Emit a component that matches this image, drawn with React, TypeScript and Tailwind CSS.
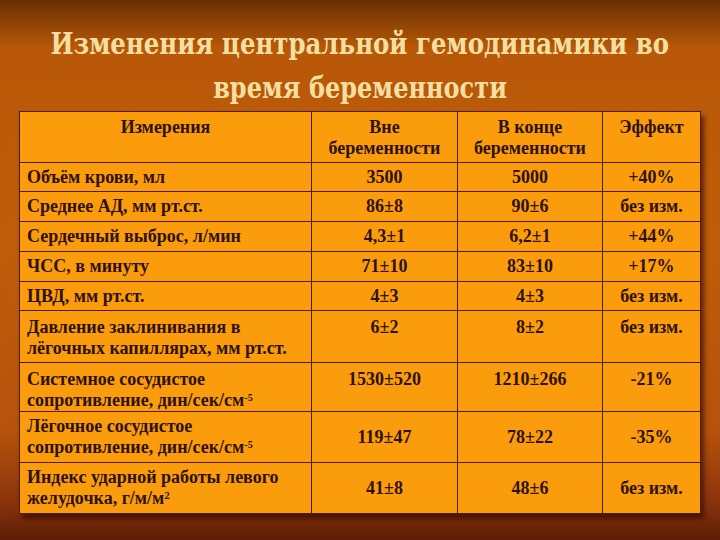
import React from 'react';

type Row = {
  label: React.ReactNode;
  a: string;
  b: string;
  c: string;
  h: string;
  top?: boolean;
};

const rows: Row[] = [
  { label: 'Объём крови, мл', a: '3500', b: '5000', c: '+40%', h: 'h-[29px]' },
  { label: 'Среднее АД, мм рт.ст.', a: '86±8', b: '90±6', c: 'без изм.', h: 'h-[30px]' },
  { label: 'Сердечный выброс, л/мин', a: '4,3±1', b: '6,2±1', c: '+44%', h: 'h-[30px]' },
  { label: 'ЧСС, в минуту', a: '71±10', b: '83±10', c: '+17%', h: 'h-[30px]' },
  { label: 'ЦВД, мм рт.ст.', a: '4±3', b: '4±3', c: 'без изм.', h: 'h-[29px]' },
  {
    label: (
      <>
        Давление заклинивания в<br />лёгочных капиллярах, мм рт.ст.
      </>
    ),
    a: '6±2',
    b: '8±2',
    c: 'без изм.',
    h: 'h-[52px]',
    top: true,
  },
  {
    label: (
      <>
        Системное сосудистое<br />сопротивление, дин/сек/см<sup className="text-[10px]">-5</sup>
      </>
    ),
    a: '1530±520',
    b: '1210±266',
    c: '-21%',
    h: 'h-[49px]',
    top: true,
  },
  {
    label: (
      <>
        Лёгочное сосудистое<br />сопротивление, дин/сек/см<sup className="text-[10px]">-5</sup>
      </>
    ),
    a: '119±47',
    b: '78±22',
    c: '-35%',
    h: 'h-[51px]',
  },
  {
    label: (
      <>
        Индекс ударной работы левого<br />желудочка, г/м/м<sup className="text-[11px]">2</sup>
      </>
    ),
    a: '41±8',
    b: '48±6',
    c: 'без изм.',
    h: 'h-[51px]',
  },
];

export default function App() {
  const cell = 'border border-[#4a1c02] bg-[#fb9c0d] px-[7px]';
  return (
    <div className="w-[720px] h-[540px] overflow-hidden bg-[linear-gradient(180deg,#663000_0%,#8c4204_4%,#b85808_9%,#c05d0a_45%,#b6520c_80%,#8a330c_93%,#5e1e06_100%)] font-['Liberation_Serif',serif]">
      <h1 className="pt-[22px] flex flex-col items-center text-[#f5dfa0] font-['DejaVu_Serif',serif] font-bold [font-stretch:condensed] text-[30px] leading-[44px]">
        <span className="shrink-0 [transform:scaleX(0.905)] origin-center whitespace-nowrap">
          Изменения центральной гемодинамики во
        </span>
        <span className="shrink-0 [transform:scaleX(0.89)] origin-center whitespace-nowrap">время беременности</span>
      </h1>
      <div className="pl-[19px] pt-[1px]">
        <table className="w-[681px] table-fixed border-collapse text-[18px] font-bold leading-[21px] text-[#2e1200] shadow-[3px_5px_5px_rgba(50,12,0,0.7)]">
          <colgroup>
            <col className="w-[292px]" />
            <col className="w-[146px]" />
            <col className="w-[145px]" />
            <col className="w-[98px]" />
          </colgroup>
          <thead>
            <tr className="h-[51px]">
              <th className={`${cell} align-top pt-[5px] text-center`}>Измерения</th>
              <th className={`${cell} align-top pt-[5px] text-center`}>
                Вне<br />беременности
              </th>
              <th className={`${cell} align-top pt-[5px] text-center`}>
                В конце<br />беременности
              </th>
              <th className={`${cell} align-top pt-[5px] text-center`}>Эффект</th>
            </tr>
          </thead>
          <tbody>
            {rows.map((r, i) => (
              <tr key={i} className={r.h}>
                <td className={`${cell} text-left ${r.top ? 'align-top pt-[6px]' : 'align-middle'}`}>{r.label}</td>
                <td className={`${cell} text-center ${r.top ? 'align-top pt-[6px]' : 'align-middle'}`}>{r.a}</td>
                <td className={`${cell} text-center ${r.top ? 'align-top pt-[6px]' : 'align-middle'}`}>{r.b}</td>
                <td className={`${cell} text-center ${r.top ? 'align-top pt-[6px]' : 'align-middle'}`}>{r.c}</td>
              </tr>
            ))}
          </tbody>
        </table>
      </div>
    </div>
  );
}
